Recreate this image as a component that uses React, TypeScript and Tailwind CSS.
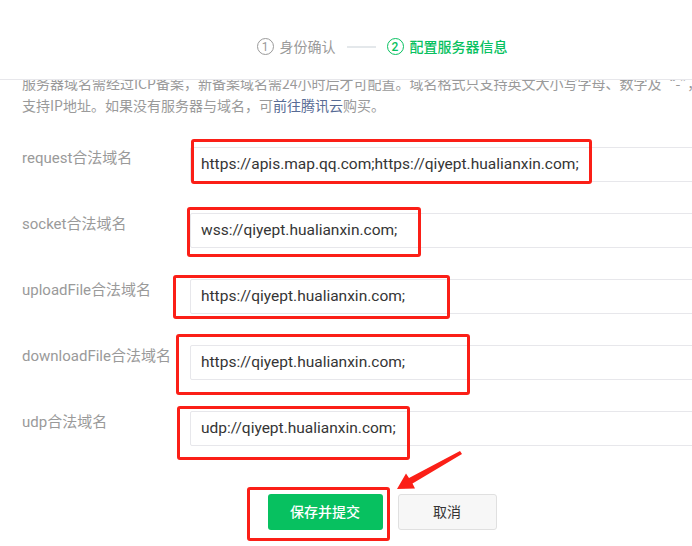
import type { ReactNode } from "react";

interface Row {
  label: string;
  value: string;
}

const rows: Row[] = [
  { label: "request合法域名", value: "https://apis.map.qq.com;https://qiyept.hualianxin.com;" },
  { label: "socket合法域名", value: "wss://qiyept.hualianxin.com;" },
  { label: "uploadFile合法域名", value: "https://qiyept.hualianxin.com;" },
  { label: "downloadFile合法域名", value: "https://qiyept.hualianxin.com;" },
  { label: "udp合法域名", value: "udp://qiyept.hualianxin.com;" },
];

// annotation boxes drawn over the screenshot
const marks = [
  "left-[191px] top-[139px] w-[401px] h-[45px]",
  "left-[187px] top-[207px] w-[234px] h-[50px]",
  "left-[173px] top-[275px] w-[277px] h-[44px]",
  "left-[176px] top-[334px] w-[294px] h-[61px]",
  "left-[177px] top-[406px] w-[233px] h-[54px]",
  "left-[247px] top-[487px] w-[143px] h-[54px]",
];

function Step({ n, active, children }: { n: number; active?: boolean; children: ReactNode }) {
  return (
    <div className={`flex items-center gap-[6px] ${active ? "text-[#07c160] font-medium" : "text-[#9a9a9a]"}`}>
      <span className="flex size-[17px] items-center justify-center rounded-full border border-current text-[12px] leading-none">
        {n}
      </span>
      <span className="text-[14px] leading-[20px]">{children}</span>
    </div>
  );
}

export default function App() {
  return (
    <div className="relative h-[546px] w-[692px] overflow-hidden bg-white font-['Roboto','Noto_Sans_CJK_SC',sans-serif]">
      <div className="w-[764px]">
        <div className="relative z-10 box-border flex h-[80px] items-center justify-center gap-[11px] border-b border-[#e7e7eb] bg-white pt-[14px]">
          <Step n={1}>身份确认</Step>
          <span className="h-[2px] w-[29px] bg-[#e4e8eb]" />
          <Step n={2} active>
            配置服务器信息
          </Step>
        </div>

        <div className="-mt-[8px] px-[22px] text-[14px] leading-[22px] text-[#9a9a9a] font-['Noto_Sans_CJK_SC',sans-serif]">
          <p className="whitespace-nowrap">
            服务器域名需经过ICP备案，新备案域名需24小时后才可配置。域名格式只支持英文大小写字母、数字及“-”，不
          </p>
          <p className="whitespace-nowrap">
            支持IP地址。如果没有服务器与域名，可<span className="text-[#576b95]">前往腾讯云</span>购买。
          </p>
        </div>

        <div className="mt-[31px] flex flex-col gap-[31px]">
          {rows.map((r) => (
            <div key={r.label} className="flex items-start">
              <label className="w-[190px] shrink-0 pl-[22px] text-[15px] leading-[22px] text-[#9a9a9a]">
                {r.label}
              </label>
              <div className="flex h-[35px] w-[552px] items-center rounded-[2px] border border-[#e7e7eb] px-[10px] text-[15.5px] text-[#353535]">
                {r.value}
              </div>
            </div>
          ))}
        </div>

        <div className="mt-[48px] flex justify-center gap-[15px] text-[14px]">
          <button
            type="button"
            className="h-[36px] w-[115px] rounded-[3px] bg-[#07c160] font-medium text-white"
          >
            保存并提交
          </button>
          <button
            type="button"
            className="h-[36px] w-[99px] rounded-[3px] border border-[#e0e0e0] bg-[#f7f7f7] text-[#353535]"
          >
            取消
          </button>
        </div>
      </div>

      {marks.map((m) => (
        <div key={m} className={`pointer-events-none absolute rounded-[3px] border-[3px] border-[#fb1f17] ${m}`} />
      ))}

      <svg className="pointer-events-none absolute left-0 top-0" width="692" height="546" aria-hidden="true">
        <polygon
          points="460,451 462,454 412.5,483.5 415,488.5 397,489 406,473.5 409,478"
          fill="#fb1f17"
        />
      </svg>
    </div>
  );
}
